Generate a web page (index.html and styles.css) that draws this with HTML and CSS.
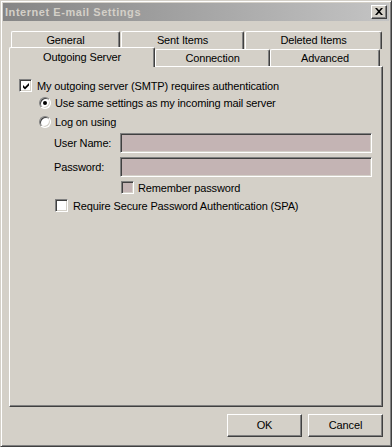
FILE: index.html
```html
<!DOCTYPE html>
<html>
<head>
<meta charset="utf-8">
<link rel="stylesheet" href="styles.css">
</head>
<body>
<div class="window">
  <div class="titlebar">
    <span class="title">Internet E-mail Settings</span>
    <span class="close"><svg width="8" height="7" viewBox="0 0 8 7"><path d="M0 0h2l2 2.2L6 0h2L5 3.5 8 7H6L4 4.8 2 7H0l3-3.5z" fill="#000"/></svg></span>
  </div>
  <div class="tabs">
    <div class="tabrow row1">
      <div class="tab w-general">General</div>
      <div class="tab w-sent">Sent Items</div>
      <div class="tab w-deleted">Deleted Items</div>
    </div>
    <div class="tabrow row2">
      <div class="tab selected w-outgoing">Outgoing Server</div>
      <div class="tab w-connection">Connection</div>
      <div class="tab w-advanced">Advanced</div>
    </div>
  </div>
  <div class="panel">
    <div class="row r-auth">
      <span class="check"><svg width="7" height="7" viewBox="0 0 7 7"><path d="M0 2L2 4L6 0V2.6L2 6.6L0 4.6Z" fill="#000"/></svg></span>
      <span class="lbl">My outgoing server (SMTP) requires authentication</span>
    </div>
    <div class="row r-same">
      <span class="radio"><span class="dot"></span></span>
      <span class="lbl">Use same settings as my incoming mail server</span>
    </div>
    <div class="row r-logon">
      <span class="radio"></span>
      <span class="lbl">Log on using</span>
    </div>
    <div class="row r-user">
      <span class="field-lbl">User Name:</span>
      <span class="input"></span>
    </div>
    <div class="row r-pass">
      <span class="field-lbl">Password:</span>
      <span class="input"></span>
    </div>
    <div class="row r-remember">
      <span class="check disabled"></span>
      <span class="lbl">Remember password</span>
    </div>
    <div class="row r-spa">
      <span class="check"></span>
      <span class="lbl">Require Secure Password Authentication (SPA)</span>
    </div>
  </div>
  <div class="buttons">
    <div class="btn">OK</div>
    <div class="btn">Cancel</div>
  </div>
</div>
</body>
</html>
```

FILE: styles.css
```css
* { box-sizing: border-box; }
html, body { margin: 0; padding: 0; background: #d4d0c8; }
body {
  font-family: "Liberation Sans", Arial, sans-serif;
  font-size: 11px;
  letter-spacing: -0.14px;
  color: #000;
}
.window {
  width: 392px;
  height: 447px;
  background: #d4d0c8;
  border: 1px solid;
  border-color: #d4d0c8 #404040 #404040 #d4d0c8;
  box-shadow: inset 1px 1px #fff, inset -1px -1px #808080;
  padding: 2px;
}
.titlebar {
  height: 18px;
  background: linear-gradient(to right, #858585, #c4c4c4);
  display: flex;
  align-items: center;
  justify-content: space-between;
  padding: 0 2px 0 2px;
}
.title {
  color: #d4d0c8;
  font-weight: bold;
  font-size: 11px;
  letter-spacing: 0.55px;
}
.close {
  width: 16px;
  height: 14px;
  background: #d4d0c8;
  border: 1px solid;
  border-color: #fff #404040 #404040 #fff;
  box-shadow: inset -1px -1px #808080;
  display: flex;
  align-items: center;
  justify-content: center;
  padding-bottom: 1px;
}
.close svg { display: block; }
.tabs {
  margin-top: 10px;
  padding-left: 8px;
}
.tabrow {
  display: flex;
}
.row1 { height: 18px; }
.row2 { height: 17px; margin-left: -2px; align-items: flex-start; }
.tab {
  height: 100%;
  background: #d4d0c8;
  border-top: 1px solid #fff;
  border-left: 1px solid #fff;
  border-right: 1px solid #404040;
  box-shadow: inset -1px 0 #808080;
  border-radius: 2px 2px 0 0;
  text-align: center;
  line-height: 17px;
  white-space: nowrap;
}
.row1 .tab { margin-right: 1px; }
.tab.selected {
  position: relative;
  z-index: 2;
  margin-top: -2px;
  height: 20px;
  line-height: 19px;
}
.w-general { width: 109px; }
.w-sent { width: 123px; }
.w-deleted { width: 137px; }
.w-outgoing { width: 146px; }
.w-connection { width: 115px; }
.w-advanced { width: 110px; }

.panel {
  margin-left: 6px;
  width: 374px;
  height: 341px;
  border: 1px solid;
  border-color: #fff #404040 #404040 #fff;
  box-shadow: inset -1px -1px #808080;
  padding-left: 9px;
  padding-top: 12px;
}
.row {
  display: flex;
  align-items: center;
  white-space: nowrap;
}
.r-auth { height: 13px; }
.r-same { height: 12px; margin-top: 5px; padding-left: 20px; }
.r-logon { height: 12px; margin-top: 7px; padding-left: 20px; }
.r-user { height: 20px; margin-top: 5px; padding-left: 35px; }
.r-pass { height: 20px; margin-top: 4px; padding-left: 35px; }
.r-remember { height: 13px; margin-top: 4px; padding-left: 102px; }
.r-spa { height: 13px; margin-top: 5px; padding-left: 36px; }

.check {
  width: 13px;
  height: 13px;
  flex: none;
  background: #fff;
  border: 1px solid;
  border-color: #808080 #fff #fff #808080;
  box-shadow: inset 1px 1px #404040, inset -1px -1px #d4d0c8;
  display: flex;
  align-items: center;
  justify-content: center;
}
.check svg { display: block; margin-left: 1px; margin-top: 1px; }
.check.disabled { background: #c4b4b4; }
.lbl { margin-left: 4px; }
.r-auth .lbl { margin-left: 5px; }
.r-spa .lbl { margin-left: 5px; }

.radio {
  width: 12px;
  height: 12px;
  flex: none;
  border-radius: 50%;
  background: #fff;
  border: 1px solid;
  border-color: #808080 #fff #fff #808080;
  box-shadow: inset 1px 1px #404040, inset -1px -1px #d4d0c8;
  display: flex;
  align-items: center;
  justify-content: center;
}
.dot {
  width: 4px;
  height: 4px;
  border-radius: 50%;
  background: #000;
}
.field-lbl { width: 66px; flex: none; }
.input {
  width: 252px;
  height: 20px;
  flex: none;
  background: #c4b4b4;
  border: 1px solid;
  border-color: #808080 #fff #fff #808080;
  box-shadow: inset 1px 1px #404040, inset -1px -1px #d4d0c8;
}
.buttons {
  display: flex;
  justify-content: flex-end;
  gap: 6px;
  margin-top: 7px;
  padding-right: 6px;
}
.btn {
  width: 75px;
  height: 23px;
  border: 1px solid;
  border-color: #fff #404040 #404040 #fff;
  box-shadow: inset -1px -1px #808080;
  display: flex;
  align-items: center;
  justify-content: center;
  padding-bottom: 1px;
}
```
